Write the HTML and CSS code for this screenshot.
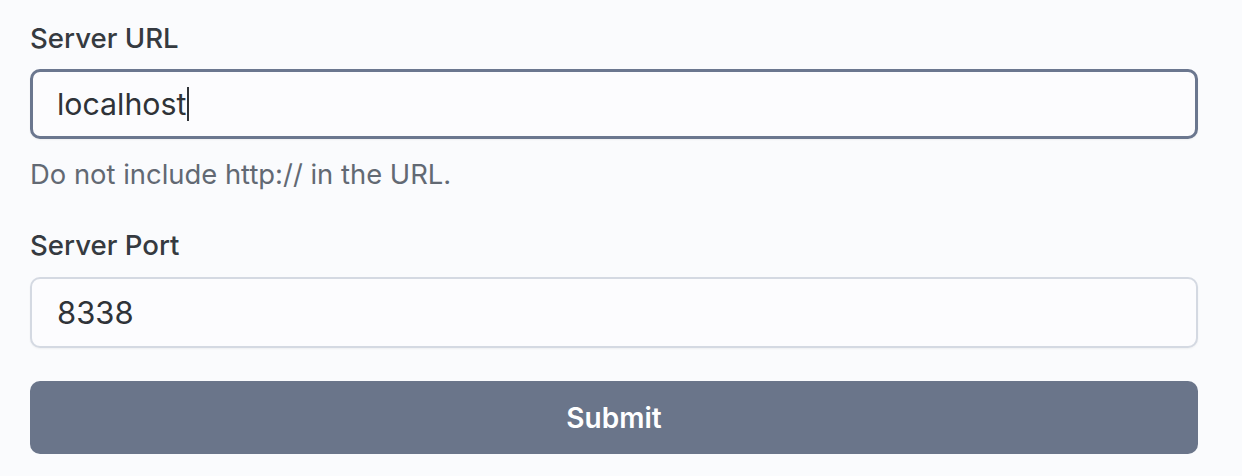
FILE: index.html
```html
<!DOCTYPE html>
<html>
<head>
<meta charset="utf-8">
<link rel="stylesheet" href="styles.css">
</head>
<body>
<form class="form">
  <label class="label">Server URL</label>
  <div class="input input-focus"><span>localhost</span><span class="caret"></span></div>
  <p class="help">Do not include http:// in the URL.</p>
  <label class="label label-2">Server Port</label>
  <div class="input">8338</div>
  <div class="button">Submit</div>
</form>
</body>
</html>
```
FILE: styles.css
```css
html, body {
  margin: 0;
  padding: 0;
  background: #fafbfd;
  font-family: Inter, "Noto Sans", sans-serif;
}
.form {
  width: 1168px;
  margin-left: 30px;
  padding-top: 20px;
  display: flex;
  flex-direction: column;
}
.label {
  font-size: 27.6px;
  line-height: 36px;
  color: #353a40;
  font-weight: 500;
}
.label-2 {
  margin-top: 35px;
}
.input {
  box-sizing: border-box;
  height: 71px;
  margin-top: 13px;
  border: 2px solid #d4d9e2;
  border-radius: 10px;
  background: #fcfcfe;
  display: flex;
  align-items: center;
  padding-left: 25px;
  font-size: 31px;
  color: #2f3338;
  box-shadow: 0 1px 2px rgba(0,0,0,0.05);
}
.input-focus {
  height: 70px;
  border: 3px solid #6b778f;
  padding-left: 24px;
  font-size: 30.3px;
}
.caret {
  display: inline-block;
  width: 2px;
  height: 34px;
  background: #2f3338;
  margin-left: 1px;
}
.help {
  margin: 17px 0 0;
  font-size: 27.4px;
  line-height: 36px;
  color: #626973;
}
.label-2 + .input {
  margin-top: 14px;
}
.button {
  margin-top: 33px;
  height: 73px;
  border-radius: 10px;
  background: #6a758a;
  color: #fff;
  font-size: 28px;
  font-weight: 600;
  display: flex;
  align-items: center;
  justify-content: center;
}
```
